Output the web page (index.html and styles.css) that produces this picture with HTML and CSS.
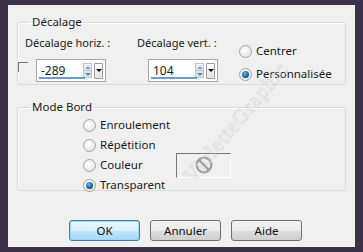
FILE: index.html
```html
<!DOCTYPE html>
<html lang="fr">
<head>
    <meta charset="UTF-8">
    <title>Décalage</title>
    <link rel="stylesheet" href="styles.css">
</head>
<body>
    <div class="dialog">
        <!-- Décalage -->
        <fieldset class="group group-offset">
            <legend>Décalage</legend>
            <div class="offset-row">
                <div class="field field-horiz">
                    <label>Décalage horiz. :</label>
                    <div class="field-line">
                        <span class="check"></span>
                        <div class="spin">
                            <span class="spin-value">-289</span>
                            <span class="spin-arrows"><i class="up"></i><i class="down"></i></span>
                            <span class="spin-drop"></span>
                        </div>
                    </div>
                </div>
                <div class="field field-vert">
                    <label>Décalage vert. :</label>
                    <div class="field-line">
                        <div class="spin">
                            <span class="spin-value">104</span>
                            <span class="spin-arrows"><i class="up"></i><i class="down"></i></span>
                            <span class="spin-drop"></span>
                        </div>
                    </div>
                </div>
                <div class="radios radios-pos">
                    <div class="radio"><span class="dot"></span>Centrer</div>
                    <div class="radio"><span class="dot on"></span>Personnalisée</div>
                </div>
            </div>
        </fieldset>

        <!-- Mode Bord -->
        <fieldset class="group group-mode">
            <legend>Mode Bord</legend>
            <div class="radios radios-mode">
                <div class="radio"><span class="dot"></span>Enroulement</div>
                <div class="radio"><span class="dot"></span>Répétition</div>
                <div class="radio"><span class="dot"></span><span class="radio-label">Couleur</span><span class="swatch"><svg width="22" height="22" viewBox="0 0 24 24"><circle cx="12" cy="12" r="8" fill="none" stroke="#a0a0a0" stroke-width="2.5"/><line x1="7" y1="7" x2="17" y2="17" stroke="#a0a0a0" stroke-width="2.5"/></svg></span></div>
                <div class="radio"><span class="dot on"></span>Transparent</div>
            </div>
        </fieldset>

        <div class="buttons">
            <button class="btn btn-default">OK</button>
            <button class="btn">Annuler</button>
            <button class="btn">Aide</button>
        </div>

        <div class="watermark">VioletteGraphic</div>
    </div>
</body>
</html>
```

FILE: styles.css
```css
*{
    margin: 0;
    padding: 0;
    box-sizing: border-box;
}
body{
    background-color: #3d3147;
    font-family: "Noto Sans", "Open Sans", sans-serif;
    font-size: 11px;
    color: #1a1a1a;
}
.dialog{
    position: relative;
    margin: 5px 8px 0 8px;
    height: 242px;
    background-color: #f0f0f0;
    padding: 10px 9px 0 9px;
    overflow: hidden;
}

/* cadres */
.group{
    border: 1px solid #dadada;
    border-radius: 3px;
    box-shadow: inset 1px 1px 0 #fff;
    padding: 0 7px;
}
.group legend{
    padding: 0 2px;
    margin-left: 5px;
    line-height: 14px;
    font-size: 11.5px;
}
.group-offset{
    height: 70px;
}
.group-mode{
    margin-top: 15px;
    height: 91px;
}

.offset-row{
    display: flex;
    white-space: nowrap;
}
.field label{
    display: block;
    margin-top: 7px;
    line-height: 14px;
}
.field-horiz{
    width: 112px;
    flex-shrink: 0;
}
.field-vert{
    width: 102px;
    flex-shrink: 0;
}
.field-line{
    display: flex;
    align-items: center;
    margin-top: 9px;
}
.field-vert .field-line{
    padding-left: 11px;
}
.check{
    width: 10px;
    height: 10px;
    border-top: 1px solid #777;
    border-left: 1px solid #777;
    margin: 3px 8px 0 -7px;
    align-self: flex-start;
}
.spin{
    display: flex;
    align-items: center;
    width: 70px;
    height: 23px;
    background: #fff;
    border: 1px solid #a9a9a9;
    padding: 0 2px 0 4px;
    position: relative;
}
.spin::after{
    content: "";
    position: absolute;
    left: 2px;
    bottom: 2px;
    width: 46px;
    height: 2px;
    background: #6a9ecb;
}
.spin-value{
    flex: 1;
    font-size: 12px;
}
.spin-arrows{
    display: flex;
    flex-direction: column;
    width: 9px;
    height: 15px;
    border: 1px solid #b8c4d0;
    margin-right: 2px;
}
.spin-arrows i{
    flex: 1;
    display: flex;
    align-items: center;
    justify-content: center;
    background: #eaf0f6;
}
.spin-arrows i::before{
    content: "";
    border-left: 3px solid transparent;
    border-right: 3px solid transparent;
}
.spin-arrows .up::before{
    border-bottom: 3px solid #8aa0b5;
}
.spin-arrows .down{
    border-top: 1px solid #b8c4d0;
    background: #d9e6f2;
}
.spin-arrows .down::before{
    border-top: 3px solid #5d86ad;
}
.spin-drop{
    width: 9px;
    height: 16px;
    border: 1px solid #9a9a9a;
    border-radius: 1px;
    background: linear-gradient(#fdfdfd, #e3e3e3);
    display: flex;
    align-items: center;
    justify-content: center;
}
.spin-drop::before{
    content: "";
    border-left: 3px solid transparent;
    border-right: 3px solid transparent;
    border-top: 3px solid #111;
}

/* boutons radio */
.radios{
    display: flex;
    flex-direction: column;
}
.radios-pos{
    margin: 15px 0 0 0;
    gap: 9px;
}
.radios-mode{
    margin: 4px 0 0 58px;
    gap: 6px;
}
.radio{
    display: flex;
    align-items: center;
    height: 14px;
    line-height: 14px;
    font-size: 11.5px;
}
.dot{
    width: 13px;
    height: 13px;
    border-radius: 50%;
    border: 1px solid #a4a4a4;
    background: radial-gradient(circle at 40% 40%, #fff, #dcdcdc);
    margin-right: 4px;
    display: flex;
    align-items: center;
    justify-content: center;
}
.dot.on::before{
    content: "";
    width: 7px;
    height: 7px;
    border-radius: 50%;
    background: radial-gradient(circle at 40% 35%, #6fb5e6, #0d4f86 70%);
}
.radio-label{
    width: 76px;
}
.swatch{
    display: flex;
    align-items: center;
    justify-content: center;
    width: 55px;
    height: 25px;
    border-top: 1px solid #777;
    border-left: 1px solid #777;
    border-right: 1px solid #fff;
    border-bottom: 1px solid #fff;
}

/* boutons */
.buttons{
    display: flex;
    justify-content: center;
    gap: 10px;
    margin-top: 29px;
    padding-left: 8px;
}
.btn{
    width: 71px;
    height: 21px;
    border: 1px solid #707070;
    border-radius: 3px;
    background: linear-gradient(#f2f2f2 0%, #ebebeb 50%, #dddddd 51%, #cfcfcf 100%);
    font-family: inherit;
    font-size: 11.5px;
    color: #111;
}
.btn-default{
    border-color: #3c7fb1;
    background: linear-gradient(#eaf6fd 0%, #d9f0fc 50%, #bee6fd 51%, #a7d9f5 100%);
    box-shadow: inset 0 0 0 1px #9fd5f5;
}

/* filigrane */
.watermark{
    position: absolute;
    left: 180px;
    top: 162px;
    font-family: "Liberation Serif", serif;
    font-size: 21px;
    color: transparent;
    -webkit-text-stroke: 0.5px #d4d4d4;
    transform: rotate(-50deg);
    transform-origin: left center;
    letter-spacing: 1px;
    pointer-events: none;
}
```
